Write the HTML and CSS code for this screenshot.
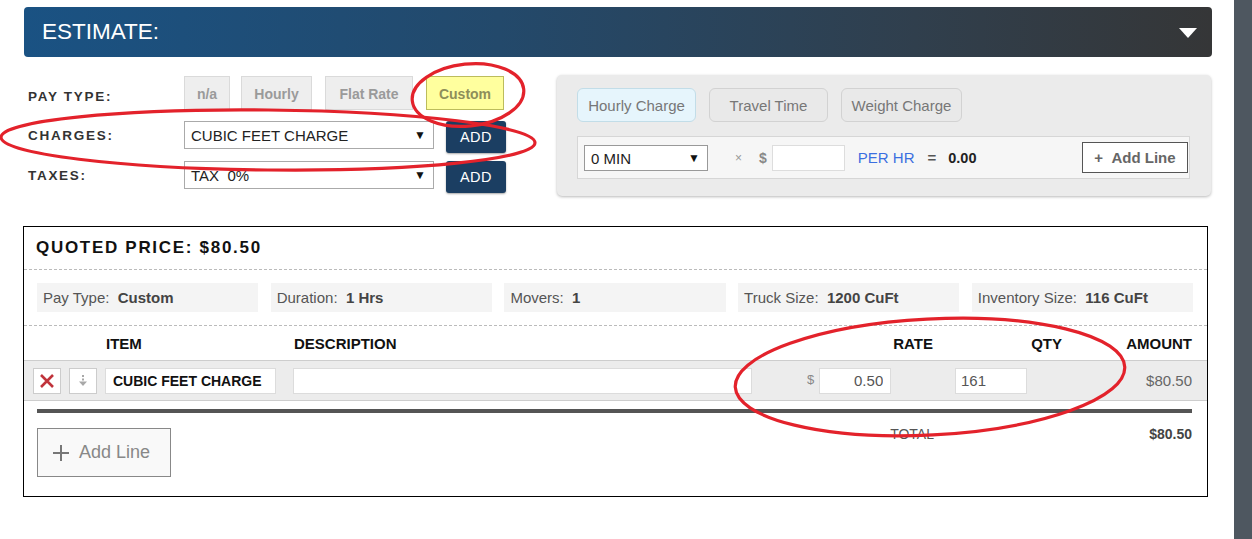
FILE: index.html
```html
<!DOCTYPE html>
<html>
<head>
<meta charset="utf-8">
<title>Estimate</title>
<link rel="stylesheet" href="styles.css">
</head>
<body>
<div class="page">
  <main class="main">
    <div class="hdr">
      <h1 class="hdr-title">ESTIMATE:</h1>
      <span class="caret"></span>
    </div>

    <div class="top">
      <div class="form">
        <div class="frow r1">
          <span class="lbl lbl-pay">PAY TYPE:</span>
          <button class="pt pt-na">n/a</button>
          <button class="pt pt-hourly">Hourly</button>
          <button class="pt pt-flat">Flat Rate</button>
          <button class="pt pt-custom">Custom</button>
        </div>
        <div class="frow r2">
          <span class="lbl">CHARGES:</span>
          <div class="sel">CUBIC FEET CHARGE<span class="arr">&#9660;</span></div>
          <button class="add">ADD</button>
        </div>
        <div class="frow r3">
          <span class="lbl">TAXES:</span>
          <div class="sel">TAX&nbsp;&nbsp;0%<span class="arr">&#9660;</span></div>
          <button class="add">ADD</button>
        </div>
      </div>

      <div class="panel">
        <div class="pbtns">
          <button class="pb pb-active">Hourly Charge</button>
          <button class="pb">Travel Time</button>
          <button class="pb pb-wide">Weight Charge</button>
        </div>
        <div class="prow">
          <div class="sel sel-min">0 MIN<span class="arr">&#9660;</span></div>
          <span class="times">&times;</span>
          <span class="dollar">$</span>
          <input class="pin" type="text" value="">
          <span class="perhr">PER HR</span>
          <span class="eq">=</span>
          <span class="zero">0.00</span>
          <button class="addline-sm">+&nbsp;&nbsp;Add Line</button>
        </div>
      </div>
    </div>

    <section class="quote">
      <div class="qtitle">QUOTED PRICE: $80.50</div>
      <div class="chips">
        <div class="chip">Pay Type:&nbsp; <b>Custom</b></div>
        <div class="chip">Duration:&nbsp; <b>1 Hrs</b></div>
        <div class="chip">Movers:&nbsp; <b>1</b></div>
        <div class="chip">Truck Size:&nbsp; <b>1200 CuFt</b></div>
        <div class="chip">Inventory Size:&nbsp; <b>116 CuFt</b></div>
      </div>

      <div class="grid ghead">
        <span class="h-act"></span>
        <span class="h-item">ITEM</span>
        <span class="h-desc">DESCRIPTION</span>
        <span class="h-rate">RATE</span>
        <span class="h-qty">QTY</span>
        <span class="h-amt">AMOUNT</span>
      </div>

      <div class="grid gline">
        <div class="acts">
          <button class="ib ib-del" aria-label="delete">
            <svg width="16" height="16" viewBox="0 0 16 16"><path d="M2 2 L14 14 M14 2 L2 14" stroke="#c0333b" stroke-width="2.6" fill="none"/></svg>
          </button>
          <button class="ib ib-down" aria-label="move down">
            <svg width="12" height="14" viewBox="0 0 12 14"><path d="M6 1 V3 M6 4.5 V6.5" stroke="#a8a8a8" stroke-width="2" fill="none"/><path d="M2 7.5 H10 L6 12 Z" fill="#a8a8a8"/></svg>
          </button>
        </div>
        <div class="c-item"><input class="in in-item" type="text" value="CUBIC FEET CHARGE"></div>
        <div class="c-desc"><input class="in in-desc" type="text" value=""></div>
        <div class="c-rate"><span class="rdollar">$</span><input class="in in-rate" type="text" value="0.50"></div>
        <div class="c-qty"><input class="in in-qty" type="text" value="161"></div>
        <div class="c-amt">$80.50</div>
      </div>

      <div class="thick"></div>

      <div class="grid gtotal">
        <div class="t-add">
          <button class="addline-lg">
            <svg width="18" height="18" viewBox="0 0 18 18"><path d="M9 1 V17 M1 9 H17" stroke="#777" stroke-width="2" fill="none"/></svg>
            <span>Add Line</span>
          </button>
        </div>
        <div class="t-label">TOTAL</div>
        <div class="t-gap"></div>
        <div class="t-amt">$80.50</div>
      </div>
    </section>
  </main>
  <div class="strip"></div>

  <svg class="marks" width="1252" height="539" viewBox="0 0 1252 539">
    <ellipse cx="468" cy="95" rx="56" ry="31" transform="rotate(-6 468 95)" fill="none" stroke="#e3222b" stroke-width="3.2"/>
    <ellipse cx="268" cy="140" rx="267" ry="30" transform="rotate(0.6 268 140)" fill="none" stroke="#e3222b" stroke-width="3.2"/>
    <ellipse cx="930" cy="377" rx="195" ry="58" transform="rotate(-3 930 377)" fill="none" stroke="#e3222b" stroke-width="3.2"/>
  </svg>
</div>
</body>
</html>
```

FILE: styles.css
```css
* { box-sizing: border-box; }

html, body {
  margin: 0;
  padding: 0;
  background: #fff;
  font-family: "Liberation Sans", Arial, sans-serif;
  color: #333;
}

button, input {
  font-family: "Liberation Sans", Arial, sans-serif;
}

.page {
  position: relative;
  display: flex;
  width: 1252px;
  height: 539px;
  overflow: hidden;
}

.main {
  flex: 1;
  padding-left: 24px;
}

.strip {
  width: 18px;
  background: #4e5760;
}

/* header */
.hdr {
  margin-top: 7px;
  width: 1188px;
  height: 50px;
  border-radius: 4px;
  background: linear-gradient(to right, #1a5283 0%, #23496b 40%, #303f4d 75%, #353637 100%);
  display: flex;
  align-items: center;
  justify-content: space-between;
  padding: 0 15px 0 18px;
}

.hdr-title {
  margin: 0;
  color: #fff;
  font-weight: normal;
  font-size: 22.5px;
  letter-spacing: 0;
}

.caret {
  width: 0;
  height: 0;
  border-left: 9.5px solid transparent;
  border-right: 9.5px solid transparent;
  border-top: 10px solid #fff;
  margin-top: 2px;
}

/* top */
.top {
  display: flex;
  margin-top: 18px;
}

.form {
  width: 533px;
}

.frow {
  display: flex;
  align-items: flex-start;
}

.r1 { margin-top: 1px; height: 34px; }
.r2 { margin-top: 11px; height: 32px; }
.r3 { margin-top: 8px; height: 32px; }

.lbl {
  width: 160px;
  padding-left: 4px;
  font-size: 13.5px;
  font-weight: bold;
  letter-spacing: 1.7px;
  color: #333;
  line-height: 30px;
}

.lbl-pay {
  line-height: 41px;
}

.pt {
  height: 34px;
  padding: 0;
  background: #eee;
  border: 1px solid #dadada;
  color: #9a9a9a;
  font-size: 14px;
  font-weight: bold;
  margin-right: 12px;
  padding-top: 2px;
}

.pt-na { width: 46px; margin-right: 11px; }
.pt-hourly { width: 71px; margin-right: 13px; }
.pt-flat { width: 88px; margin-right: 13px; }
.pt-custom {
  width: 78px;
  background: #ffff9e;
  border-color: #bcbc5c;
  color: #8e8e5a;
}

.sel {
  position: relative;
  width: 250px;
  height: 28px;
  border: 1px solid #aaa;
  background: #fff;
  font-size: 15px;
  color: #222;
  line-height: 27px;
  padding-left: 6px;
  white-space: nowrap;
}

.arr {
  position: absolute;
  right: 7px;
  top: 0;
  font-size: 12px;
  color: #111;
}

.add {
  margin-left: 12px;
  width: 60px;
  height: 32px;
  background: #1b3e62;
  border: none;
  border-radius: 3px;
  color: #fff;
  font-size: 14.5px;
  letter-spacing: 0.5px;
  box-shadow: 0 1px 2px rgba(0,0,0,.35);
}

/* panel */
.panel {
  width: 654px;
  height: 121px;
  background: #ebebeb;
  border-radius: 5px;
  box-shadow: 0 1px 3px rgba(0,0,0,.28);
  padding: 13px 20px;
}

.pbtns {
  display: flex;
  gap: 13px;
}

.pb {
  width: 119px;
  height: 34px;
  border: 1px solid #d2d2d2;
  border-radius: 6px;
  background: #e9e9e9;
  color: #777;
  font-size: 15px;
  padding: 0;
}

.pb-wide { width: 121px; }

.pb-active {
  background: #e6f5fc;
  border-color: #c2dde8;
}

.prow {
  margin-top: 14px;
  width: 613px;
  height: 43px;
  background: #f6f6f6;
  border: 1px solid #d6d6d6;
  display: flex;
  align-items: center;
  padding-left: 6px;
}

.sel-min {
  width: 124px;
  height: 26px;
  line-height: 25px;
  border-color: #999;
  font-size: 15px;
}

.times {
  margin-left: 27px;
  font-size: 12px;
  color: #999;
}

.dollar {
  margin-left: 17px;
  font-size: 14px;
  font-weight: bold;
  color: #888;
}

.pin {
  margin-left: 5px;
  width: 73px;
  height: 26px;
  border: 1px solid #ddd;
  background: #fff;
  outline: none;
}

.perhr {
  margin-left: 13px;
  color: #3b6fe0;
  font-size: 15px;
}

.eq {
  margin-left: 13px;
  font-weight: bold;
  font-size: 15px;
  color: #555;
}

.zero {
  margin-left: 12px;
  font-weight: bold;
  font-size: 14.5px;
  color: #222;
}

.addline-sm {
  margin-left: auto;
  margin-right: 1px;
  width: 106px;
  height: 31px;
  background: #fff;
  border: 1px solid #555;
  color: #666;
  font-size: 15px;
  font-weight: bold;
  padding: 0;
}

/* quote */
.quote {
  margin-top: 30px;
  margin-left: -1px;
  width: 1185px;
  height: 271px;
  border: 1px solid #000;
}

.qtitle {
  height: 43px;
  line-height: 42px;
  padding-left: 12px;
  font-size: 17px;
  font-weight: bold;
  letter-spacing: 1.7px;
  color: #111;
  border-bottom: 1px dashed #bbb;
}

.chips {
  display: grid;
  grid-template-columns: repeat(5, 1fr);
  gap: 12.5px;
  padding: 13px 14px 13px 13px;
  border-bottom: 1px dashed #bbb;
}

.chip {
  height: 29px;
  line-height: 29px;
  background: #f4f4f4;
  padding-left: 6px;
  font-size: 15px;
  color: #555;
  white-space: nowrap;
}

.chip b {
  color: #444;
}

.grid {
  display: grid;
  grid-template-columns: 72px 188px 459px 183px 129px 128px;
  padding-left: 9px;
  padding-right: 15px;
}

.ghead {
  height: 34px;
  align-items: center;
  font-size: 15px;
  font-weight: bold;
  color: #111;
}

.h-item { padding-left: 1px; }
.h-desc { padding-left: 1px; }
.h-rate { text-align: right; padding-right: 2px; }
.h-qty { text-align: right; padding-right: 2px; }
.h-amt { text-align: right; }

.gline {
  height: 41px;
  background: #ececec;
  border-top: 1px solid #cdcdcd;
  border-bottom: 1px solid #cdcdcd;
  align-items: center;
}

.acts {
  display: flex;
  gap: 8px;
  padding-top: 1px;
}

.ib {
  width: 28px;
  height: 26px;
  background: #fff;
  border: 1px solid #ccc;
  padding: 0;
  display: flex;
  align-items: center;
  justify-content: center;
}

.in {
  height: 26px;
  border: 1px solid #dcdcdc;
  background: #fff;
  outline: none;
  font-size: 14px;
  color: #333;
  padding: 0 7px;
}

.in-item {
  width: 171px;
  font-weight: bold;
  font-size: 14px;
  color: #111;
}

.in-desc { width: 459px; }

.c-rate {
  display: flex;
  align-items: center;
  padding-left: 55px;
}

.rdollar {
  font-size: 13px;
  color: #888;
  margin-right: 5px;
  margin-top: -3px;
}

.in-rate {
  width: 72px;
  text-align: right;
  font-size: 15px;
  color: #555;
}

.c-qty { padding-left: 20px; }

.in-qty {
  width: 72px;
  font-size: 15px;
  color: #555;
  padding-left: 5px;
}

.c-amt {
  text-align: right;
  font-size: 15px;
  color: #666;
}

.thick {
  margin: 8px 15px 0 13px;
  height: 4px;
  background: #555;
}

.gtotal {
  grid-template-columns: 719px 183px 129px 128px;
  padding-top: 15px;
  align-items: start;
}

.t-add { padding-left: 4px; }

.addline-lg {
  width: 134px;
  height: 49px;
  background: #f9f9f9;
  border: 1px solid #888;
  display: flex;
  align-items: center;
  padding: 0 0 0 14px;
  gap: 9px;
  color: #888;
  font-size: 18px;
}

.t-label {
  text-align: right;
  padding-right: 1px;
  font-size: 14px;
  color: #555;
  margin-top: -2px;
}

.t-amt {
  text-align: right;
  font-size: 14px;
  font-weight: bold;
  color: #444;
  margin-top: -2px;
}

.marks {
  position: absolute;
  left: 0;
  top: 0;
  pointer-events: none;
}
```
